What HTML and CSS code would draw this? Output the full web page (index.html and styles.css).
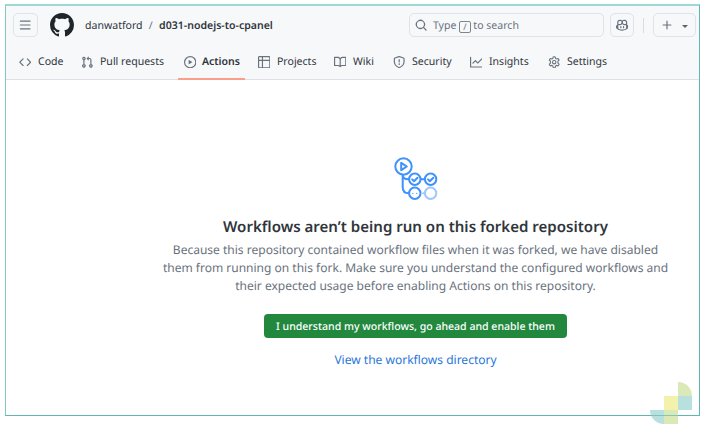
FILE: index.html
```html
<!DOCTYPE html>
<html lang="en">
<head>
<meta charset="utf-8">
<title>danwatford/d031-nodejs-to-cpanel · Actions</title>
<link rel="stylesheet" href="styles.css">
</head>
<body>
<div class="frame">
  <header class="header">
    <div class="topbar">
      <button class="box menu" aria-label="Menu"><svg class="icon" viewBox="0 0 16 16"><path d="M1 2.75A.75.75 0 0 1 1.75 2h12.5a.75.75 0 0 1 0 1.5H1.75A.75.75 0 0 1 1 2.75Zm0 5A.75.75 0 0 1 1.75 7h12.5a.75.75 0 0 1 0 1.5H1.75A.75.75 0 0 1 1 7.75ZM1.75 12h12.5a.75.75 0 0 1 0 1.5H1.75a.75.75 0 0 1 0-1.5Z"/></svg></button>
      <svg class="logo" viewBox="0 0 16 16"><path d="M8 0c4.42 0 8 3.58 8 8a8.013 8.013 0 0 1-5.45 7.59c-.4.08-.55-.17-.55-.38 0-.27.01-1.13.01-2.2 0-.75-.25-1.23-.54-1.48 1.78-.2 3.65-.88 3.65-3.95 0-.88-.31-1.59-.82-2.15.08-.2.36-1.02-.08-2.12 0 0-.67-.22-2.2.82-.64-.18-1.32-.27-2-.27-.68 0-1.36.09-2 .27-1.53-1.03-2.2-.82-2.2-.82-.44 1.1-.16 1.92-.08 2.12-.51.56-.82 1.28-.82 2.15 0 3.06 1.86 3.75 3.64 3.95-.23.2-.44.55-.51 1.07-.46.21-1.61.55-2.33-.66-.15-.24-.6-.83-1.23-.82-.67.01-.27.38.01.53.34.19.73.9.82 1.13.16.45.68 1.31 2.69.94 0 .67.01 1.3.01 1.49 0 .21-.15.45-.55.38A7.995 7.995 0 0 1 0 8c0-4.42 3.58-8 8-8Z"/></svg>
      <div class="crumbs"><span>danwatford</span><span class="slash">/</span><strong>d031-nodejs-to-cpanel</strong></div>
      <div class="box search">
        <svg class="icon" viewBox="0 0 16 16"><path d="M10.68 11.74a6 6 0 0 1-7.922-8.982 6 6 0 0 1 8.982 7.922l3.04 3.04a.749.749 0 1 1-1.06 1.06ZM11.5 7a4.499 4.499 0 1 0-8.997 0A4.499 4.499 0 0 0 11.5 7Z"/></svg>
        <span class="type">Type</span><span class="key">/</span><span class="hint">to search</span>
      </div>
      <button class="box copilot" aria-label="Copilot"><svg class="icon" viewBox="0 0 16 16"><path d="M7.998 15.035c-4.562 0-7.873-2.914-7.998-3.749V9.338c.085-.628.677-1.686 1.588-2.065.013-.07.024-.143.036-.218.029-.183.06-.384.126-.612-.201-.508-.254-1.084-.254-1.656 0-.87.128-1.769.693-2.484.579-.733 1.494-1.124 2.724-1.261 1.206-.134 2.262.034 2.944.765.05.053.096.108.139.165.044-.057.094-.112.143-.165.682-.731 1.738-.899 2.944-.765 1.23.137 2.145.528 2.724 1.261.566.715.693 1.614.693 2.484 0 .572-.053 1.148-.254 1.656.066.228.098.429.126.612.012.076.024.148.037.218.924.385 1.522 1.471 1.591 2.095v1.872c0 .766-3.351 3.795-8.002 3.795Zm0-1.485c2.28 0 4.584-1.11 5.002-1.433V7.862l-.023-.116c-.49.21-1.075.291-1.727.291-1.146 0-2.059-.327-2.71-.991A3.222 3.222 0 0 1 8 6.303a3.24 3.24 0 0 1-.544.743c-.65.664-1.563.991-2.71.991-.652 0-1.236-.081-1.727-.291l-.023.116v4.255c.419.323 2.722 1.433 5.002 1.433ZM6.762 2.83c-.193-.206-.637-.413-1.682-.297-1.019.113-1.479.404-1.713.7-.247.312-.369.789-.369 1.554 0 .793.129 1.171.308 1.371.162.181.519.379 1.442.379.853 0 1.339-.235 1.638-.54.315-.322.527-.827.617-1.553.117-.935-.037-1.395-.241-1.614Zm4.155-.297c-1.044-.116-1.488.091-1.681.297-.204.219-.359.679-.242 1.614.091.726.303 1.231.618 1.553.299.305.784.54 1.638.54.922 0 1.28-.198 1.442-.379.179-.2.308-.578.308-1.371 0-.765-.123-1.242-.37-1.554-.233-.296-.693-.587-1.713-.7Z"/><path d="M6.25 9.037a.75.75 0 0 1 .75.75v1.501a.75.75 0 0 1-1.5 0V9.787a.75.75 0 0 1 .75-.75Zm4.25.75v1.501a.75.75 0 0 1-1.5 0V9.787a.75.75 0 0 1 1.5 0Z"/></svg></button>
      <span class="divider"></span>
      <button class="box create" aria-label="Create new"><svg class="icon" viewBox="0 0 16 16"><path d="M7.75 2a.75.75 0 0 1 .75.75V7h4.25a.75.75 0 0 1 0 1.5H8.5v4.25a.75.75 0 0 1-1.5 0V8.5H2.75a.75.75 0 0 1 0-1.5H7V2.75A.75.75 0 0 1 7.75 2Z"/></svg><span class="caret"></span></button>
    </div>
    <nav class="tabs">
      <a class="tab"><svg class="icon" viewBox="0 0 16 16"><path d="m11.28 3.22 4.25 4.25a.75.75 0 0 1 0 1.06l-4.25 4.25a.749.749 0 1 1-1.06-1.06L13.94 8l-3.72-3.72a.749.749 0 1 1 1.06-1.06Zm-6.56 0a.751.751 0 1 1 1.06 1.06L2.06 8l3.72 3.72a.749.749 0 1 1-1.06 1.06L.47 8.53a.75.75 0 0 1 0-1.06Z"/></svg><span>Code</span></a>
      <a class="tab"><svg class="icon" viewBox="0 0 16 16"><path d="M1.5 3.25a2.25 2.25 0 1 1 3 2.122v5.256a2.251 2.251 0 1 1-1.5 0V5.372A2.25 2.25 0 0 1 1.5 3.25Zm5.677-.177L9.573.677A.25.25 0 0 1 10 .854V2.5h1A2.5 2.5 0 0 1 13.5 5v5.628a2.251 2.251 0 1 1-1.5 0V5a1 1 0 0 0-1-1h-1v1.646a.25.25 0 0 1-.427.177L7.177 3.427a.25.25 0 0 1 0-.354ZM3.75 2.5a.75.75 0 1 0 0 1.5.75.75 0 0 0 0-1.5Zm0 9.5a.75.75 0 1 0 0 1.5.75.75 0 0 0 0-1.5Zm8.25.75a.75.75 0 1 0 1.5 0 .75.75 0 0 0-1.5 0Z"/></svg><span>Pull requests</span></a>
      <a class="tab active"><svg class="icon" viewBox="0 0 16 16"><path d="M8 0a8 8 0 1 1 0 16A8 8 0 0 1 8 0ZM1.5 8a6.5 6.5 0 1 0 13 0 6.5 6.5 0 0 0-13 0Zm4.879-2.773 4.264 2.559a.25.25 0 0 1 0 .428l-4.264 2.559A.25.25 0 0 1 6 10.559V5.442a.25.25 0 0 1 .379-.215Z"/></svg><span>Actions</span></a>
      <a class="tab"><svg class="icon" viewBox="0 0 16 16"><path d="M0 1.75C0 .784.784 0 1.75 0h12.5C15.216 0 16 .784 16 1.75v12.5A1.75 1.75 0 0 1 14.25 16H1.75A1.75 1.75 0 0 1 0 14.25ZM6.5 6.5v8h7.75a.25.25 0 0 0 .25-.25V6.5Zm8-1.5V1.75a.25.25 0 0 0-.25-.25H6.5V5Zm-13 1.5v7.75c0 .138.112.25.25.25H5v-8ZM5 5V1.5H1.75a.25.25 0 0 0-.25.25V5Z"/></svg><span>Projects</span></a>
      <a class="tab"><svg class="icon" viewBox="0 0 16 16"><path d="M0 1.75A.75.75 0 0 1 .75 1h4.253c1.227 0 2.317.59 3 1.501A3.743 3.743 0 0 1 11.006 1h4.245a.75.75 0 0 1 .75.75v10.5a.75.75 0 0 1-.75.75h-4.507a2.25 2.25 0 0 0-1.591.659l-.622.621a.75.75 0 0 1-1.06 0l-.622-.621A2.25 2.25 0 0 0 5.258 13H.75a.75.75 0 0 1-.75-.75Zm7.251 10.324.004-5.073-.002-2.253A2.25 2.25 0 0 0 5.003 2.5H1.5v9h3.757a3.75 3.75 0 0 1 1.994.574ZM8.755 4.75l-.004 7.322a3.752 3.752 0 0 1 1.992-.572H14.5v-9h-3.495a2.25 2.25 0 0 0-2.25 2.25Z"/></svg><span>Wiki</span></a>
      <a class="tab"><svg class="icon" viewBox="0 0 16 16"><path d="M7.467.133a1.748 1.748 0 0 1 1.066 0l5.25 1.68A1.75 1.75 0 0 1 15 3.48V7c0 1.566-.32 3.182-1.303 4.682-.983 1.498-2.585 2.813-5.032 3.855a1.697 1.697 0 0 1-1.33 0c-2.447-1.042-4.049-2.357-5.032-3.855C1.32 10.182 1 8.566 1 7V3.48a1.75 1.75 0 0 1 1.217-1.667Zm.61 1.429a.25.25 0 0 0-.153 0l-5.25 1.68a.25.25 0 0 0-.174.238V7c0 1.358.275 2.666 1.057 3.86.784 1.194 2.121 2.34 4.366 3.297a.196.196 0 0 0 .154 0c2.245-.956 3.582-2.104 4.366-3.298C13.225 9.666 13.5 8.36 13.5 7V3.48a.251.251 0 0 0-.174-.237l-5.25-1.68ZM8.75 4.75v3a.75.75 0 0 1-1.5 0v-3a.75.75 0 0 1 1.5 0ZM9 10.5a1 1 0 1 1-2 0 1 1 0 0 1 2 0Z"/></svg><span>Security</span></a>
      <a class="tab"><svg class="icon" viewBox="0 0 16 16"><path d="M1.5 1.75V13.5h13.75a.75.75 0 0 1 0 1.5H.75a.75.75 0 0 1-.75-.75V1.75a.75.75 0 0 1 1.5 0Zm14.28 2.53-5.25 5.25a.75.75 0 0 1-1.06 0L7 7.06 4.28 9.78a.751.751 0 0 1-1.06-1.06l3.25-3.25a.75.75 0 0 1 1.06 0L10 7.94l4.72-4.72a.751.751 0 1 1 1.06 1.06Z"/></svg><span>Insights</span></a>
      <a class="tab"><svg class="icon outline" viewBox="0 0 16 16"><path d="M6.7 1.2Q8 .6 9.3 1.2L9.7 3.1 11 3.9 12.9 3.2Q14 4 14.3 5.4L12.8 6.8V9.2L14.3 10.6Q14 12 12.9 12.8L11 12.1 9.7 12.9 9.3 14.8Q8 15.4 6.7 14.8L6.3 12.9 5 12.1 3.1 12.8Q2 12 1.7 10.6L3.2 9.2V6.8L1.7 5.4Q2 4 3.1 3.2L5 3.9 6.3 3.1Z"/><circle cx="8" cy="8" r="2.2"/></svg><span>Settings</span></a>
    </nav>
  </header>
  <main class="blank">
    <svg class="hero" viewBox="0 0 44 44">
      <circle cx="9.5" cy="9.5" r="8.2"/><path d="M7.2 5.8v7.4l5.6-3.7Z"/>
      <path d="M8.7 17.8v12.5q0 6 6 6M8.7 17.8q0 4.5 6 4.5M26.8 22.3h4"/>
      <circle cx="20.8" cy="22.3" r="5.7"/><circle cx="36.6" cy="22.3" r="5.7"/>
      <path d="m18.2 22.4 1.8 1.8 3.5-3.5M34 22.4l1.8 1.8 3.5-3.5"/>
      <circle cx="20.8" cy="36.3" r="5.7"/>
      <path class="dots" d="M18.8 36.3h.1M22.7 36.3h.1"/>
      <g class="pale"><circle cx="36.6" cy="36.3" r="5.7"/><path d="M29.2 36.3h1.6"/></g>
    </svg>
    <h1>Workflows aren’t being run on this forked repository</h1>
    <p>Because this repository contained workflow files when it was forked, we have disabled<br>them from running on this fork. Make sure you understand the configured workflows and<br>their expected usage before enabling Actions on this repository.</p>
    <button class="enable">I understand my workflows, go ahead and enable them</button>
    <a class="directory">View the workflows directory</a>
  </main>
  <svg class="mark" viewBox="0 0 42 42"><path fill="#dbe9b9" d="M28 0a14 14 0 0 1 14 14H28Z"/><path fill="#f3f2ad" d="M14 14h14v14H14Z"/><path fill="#b7e0df" d="M28 14h14v14H28ZM0 28h14v14A14 14 0 0 1 0 28Z"/><path fill="#dbe9b9" d="M14 28h14v14H14Z"/><path class="rule" d="M0 33.5h28"/></svg>
</div>
</body>
</html>
```
FILE: styles.css
```css
* { box-sizing: border-box; }
body { display: flow-root; min-height: 430px; margin: 0; background: #fff; color: #30353b; font-family: "Noto Sans", sans-serif; font-size: 10.55px; text-rendering: geometricPrecision; }
button { font: inherit; padding: 0; text-rendering: inherit; }
svg { display: block; flex: none; }
.frame { position: relative; width: 695px; height: 412px; margin: 4px 0 0 5px; border: 1px solid #62b5b1; border-top: 2px solid #9fd7d3; border-left-color: #84c6c2; }
.header { height: 74px; background: #f6f8fa; border-bottom: 1px solid #dde1e5; }
.topbar { display: flex; align-items: center; height: 38px; padding: 0 3px 0 7px; }
.box { display: flex; align-items: center; justify-content: center; height: 24px; border: 1px solid #dfe3e8; border-radius: 5px; background: #f6f8fa; }
.icon { width: 12.4px; height: 12.4px; fill: #69727d; }
.outline { fill: none; stroke: #69727d; stroke-width: 1.4; stroke-linejoin: round; }
.menu { width: 25px; }
.logo { width: 24px; height: 24px; margin-left: 12px; fill: #20252a; }
.crumbs { display: flex; width: 335px; padding: 2px 0 0 11px; white-space: nowrap; }
.slash { width: 16.5px; text-align: center; color: #69727d; }
.crumbs strong { font-weight: 600; }
.search { width: 195px; justify-content: flex-start; padding-left: 5px; color: #69727d; }
.type { margin-left: 5.5px; padding-top: 2px; }
.key { display: flex; align-items: center; justify-content: center; width: 12px; height: 12px; margin: 3px 2.5px 0; border: 1px solid #7d858f; border-radius: 2px; font-size: 9px; line-height: 1; }
.hint { padding-top: 2px; }
.copilot { width: 24px; margin-left: 6px; }
.divider { width: 1px; height: 15px; margin: 0 9px; background: #d8dde2; }
.create { width: 43px; gap: 8px; }
.caret { border: 3px solid transparent; border-top-color: #59636e; border-bottom: 0; margin-top: 2px; }
.tabs { display: grid; grid-template-columns: 62px 103px 74px 76px 59px 77px 78px 70px; height: 35px; padding-left: 13px; }
.tab { position: relative; display: flex; align-items: center; gap: 6.6px; padding-top: 1px; white-space: nowrap; }
.active { gap: 5.5px; font-weight: 600; }
.active::after { content: ""; position: absolute; left: -6px; bottom: -1px; width: 67px; height: 2px; background: #fb9f8c; }
.blank { display: flex; flex-direction: column; align-items: center; padding: 77px 0 0 126px; width: 693px; }
.hero { width: 44px; height: 44px; fill: none; stroke: #3f91fb; stroke-width: 2; stroke-linecap: round; stroke-linejoin: round; }
.dots { stroke-width: 1.2; }
.pale { opacity: .5; }
h1 { margin: 14px 0 0; font-size: 15.05px; font-weight: 600; line-height: 24px; white-space: nowrap; }
p { margin: 2px 0 0; font-size: 12.02px; line-height: 18px; text-align: center; color: #69727d; white-space: nowrap; }
.enable { width: 303px; height: 24px; margin-top: 19px; padding-top: 1px; border: 0; border-radius: 4px; background: #22883e; color: #fff; font-weight: 500; }
.directory { margin-top: 13px; font-size: 12.02px; line-height: 18px; color: #2877d9; }
.mark { position: absolute; left: 644px; top: 376px; width: 42px; height: 42px; }
.rule { stroke: #62b5b1; stroke-opacity: .7; }
```
